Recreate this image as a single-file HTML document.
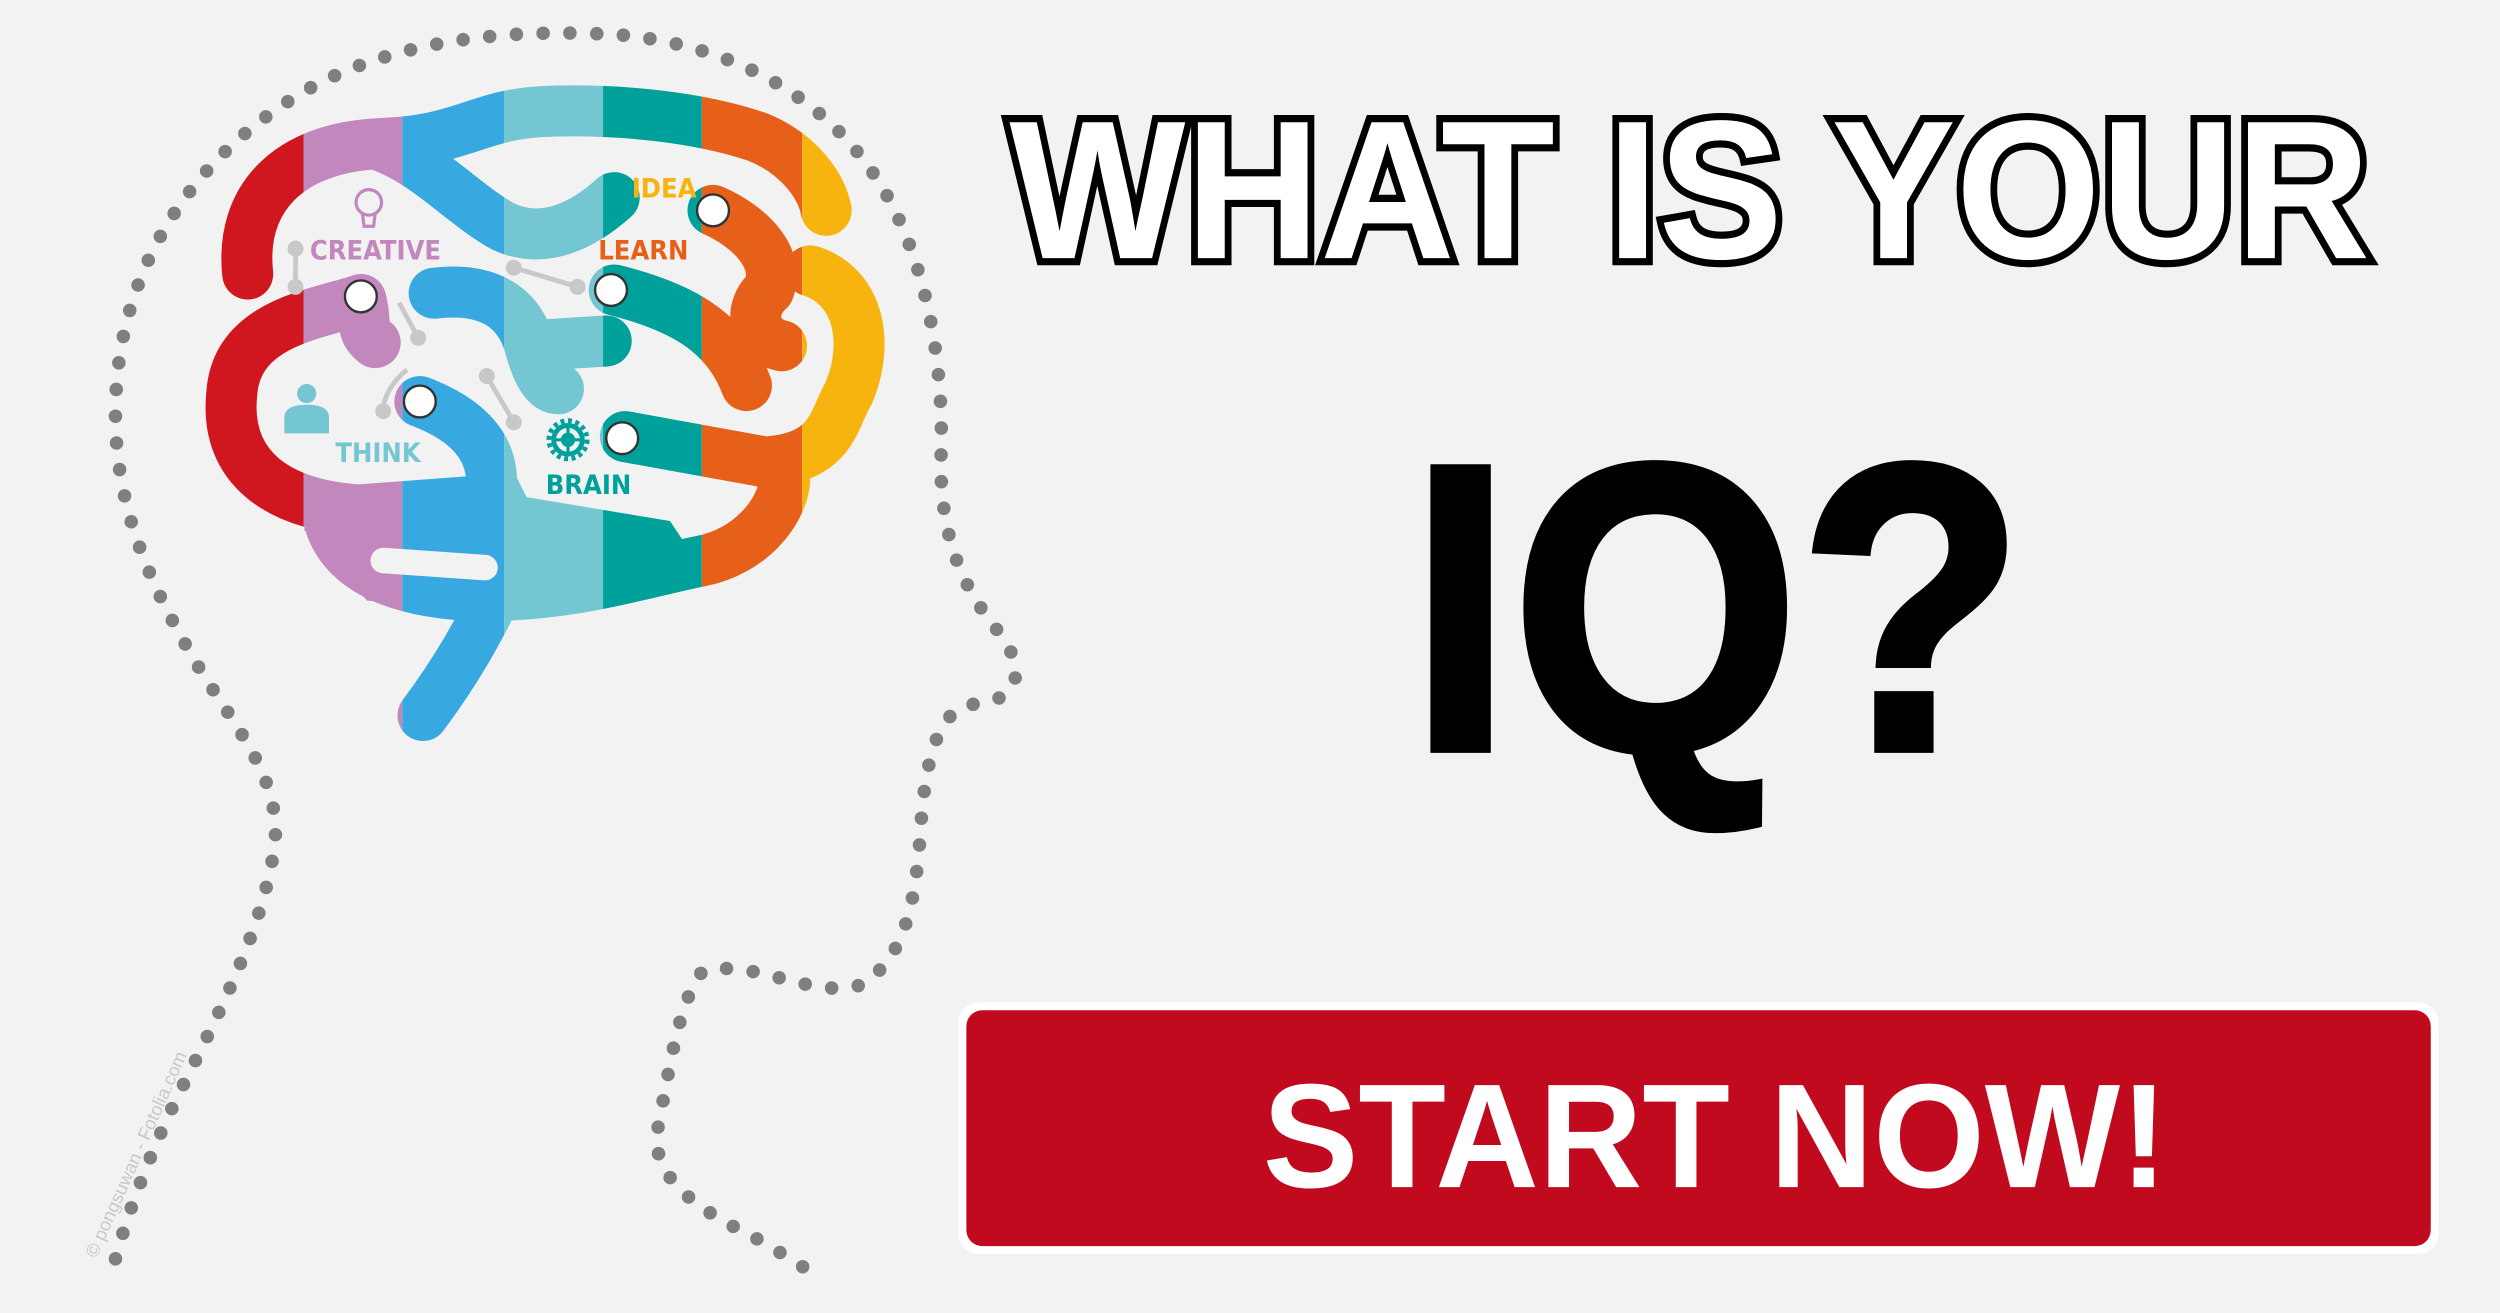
<!DOCTYPE html>
<html><head><meta charset="utf-8"><style>
html,body{margin:0;padding:0;background:#f2f2f2;overflow:hidden}
svg{display:block}
</style></head><body>
<svg width="2500" height="1313" viewBox="0 0 1568 824" xmlns="http://www.w3.org/2000/svg">
<rect width="1568" height="824" fill="#f2f2f2"/>
<path d="M72,790 C80,760 95,720 115,680 C140,630 165,580 172,530 C176,490 150,460 125,420 C95,370 72,320 72,260 C72,170 120,95 200,52 C260,22 330,18 390,22 C470,30 530,70 560,130 C585,180 592,240 590,290 C590,340 605,370 625,395 C645,420 640,440 610,442 C590,445 582,470 578,510 C575,560 570,600 540,618 C510,628 470,600 440,610 C425,630 420,670 412,710 C408,740 440,760 470,775 C485,783 495,790 505,796" fill="none" stroke="#7f7f7f" stroke-width="8.5" stroke-linecap="round" stroke-dasharray="0 16.8"/>
<defs>
<mask id="bm">
<g fill="none" stroke="#fff" stroke-width="32" stroke-linecap="round" stroke-linejoin="round">
<path d="M155,172 C150,125 180,92 240,90 C290,88 300,72 340,70 C390,68 440,74 475,86 C500,96 515,116 518,132"/>
<path d="M240,92 C270,104 290,128 315,142 C340,154 365,142 385,124"/>
<path d="M226,188 C200,197 148,202 145,247 C140,294 175,317 225,320 L292,315"/>
<path d="M226,188 C230,202 225,207 235,215"/>
<path d="M263,252 C295,264 308,282 308,302 L308,332"/>
<path d="M205,322 C210,352 240,372 300,374 C360,374 400,360 440,352 C470,346 490,322 492,302"/>
<path d="M316,362 C300,397 285,422 265,449"/>
<path d="M272,184 C305,180 325,192 332,217 C338,240 345,244 350,244"/>
<path d="M332,217 L380,214"/>
<path d="M385,182 C425,192 455,207 468,242"/>
<path d="M447,132 C470,142 490,162 482,182 C470,192 470,212 490,217"/>
<path d="M508,170 C540,180 545,217 532,247 C522,264 522,287 480,290 L392,274"/>
</g>
<path d="M190,332 L300,322 L320,292 L330,312 L420,327 L440,357 L320,382 L230,377 Z" fill="#fff"/>
<rect x="232" y="346" width="80" height="16" rx="8" fill="#000" transform="rotate(4 272 354)"/>
</mask>
</defs>
<g mask="url(#bm)">
<rect x="120" y="50" width="70" height="420" fill="#d0161f"/>
<rect x="190" y="50" width="62" height="420" fill="#c288bd"/>
<rect x="252" y="50" width="64" height="420" fill="#38a8e0"/>
<rect x="316" y="50" width="62" height="420" fill="#74c6d2"/>
<rect x="378" y="50" width="62" height="420" fill="#00a19a"/>
<rect x="440" y="50" width="63" height="420" fill="#e7601a"/>
<rect x="503" y="50" width="70" height="420" fill="#f7b40f"/>
</g>
<g fill="#fff" stroke="#333" stroke-width="1.5">
<circle cx="447" cy="132" r="10"/><circle cx="226" cy="186" r="10"/><circle cx="383" cy="182" r="10"/><circle cx="263" cy="252" r="10"/><circle cx="390" cy="275" r="10"/>
</g>
<g stroke="#c8c8c8" stroke-width="3" fill="#c8c8c8">
<line x1="185" y1="156" x2="185" y2="180"/><circle cx="185" cy="156" r="3.5"/><circle cx="185" cy="180" r="3.5"/>
<line x1="250" y1="190" x2="262" y2="212"/><circle cx="262" cy="212" r="3.5"/>
<line x1="322" y1="168" x2="362" y2="180"/><circle cx="322" cy="168" r="3.5"/><circle cx="362" cy="180" r="3.5"/>
<path d="M255,232 C245,240 240,250 240,258" fill="none"/><circle cx="240" cy="258" r="3.5"/>
<line x1="305" y1="236" x2="322" y2="265"/><circle cx="305" cy="236" r="3.5"/><circle cx="322" cy="265" r="3.5"/>
</g>
<g font-family="'DejaVu Sans Condensed','Liberation Sans Narrow','Liberation Sans',sans-serif" font-weight="bold" font-size="17">
<text x="194" y="163" fill="#c288bd">CREATIVE</text>
<text x="396" y="124" fill="#f7b40f">IDEA</text>
<text x="375" y="163" fill="#e7601a">LEARN</text>
<text x="210" y="290" fill="#74c6d2">THINK</text>
<text x="342" y="310" fill="#00a19a">BRAIN</text>
</g>
<g fill="none" stroke="#c288bd" stroke-width="2"><circle cx="231" cy="127" r="8"/><path d="M227,134 L228,142 L234,142 L235,134"/></g>
<circle cx="192" cy="247" r="6" fill="#74c6d2"/><path d="M178,272 L178,262 C178,256 184,254 192,254 C200,254 206,256 206,262 L206,272 Z" fill="#74c6d2"/>
<g fill="none" stroke="#00a19a" stroke-width="3"><circle cx="356" cy="276" r="9"/><circle cx="356" cy="276" r="3"/><path d="M356,267 V285 M347,276 H365" stroke-width="2"/><circle cx="356" cy="276" r="12" stroke-dasharray="2.5 2.2" stroke-width="3"/></g>
<text transform="translate(60,790) rotate(-66)" font-family="'Liberation Sans',sans-serif" font-size="11.5" fill="#c8c8c8">© pongsuwan - Fotolia.com</text>
<text x="633" y="162" font-family="'Liberation Sans',sans-serif" font-weight="bold" font-size="124" fill="#fff" stroke="#000" stroke-width="9" paint-order="stroke" stroke-linejoin="miter" textLength="854" lengthAdjust="spacingAndGlyphs">WHAT IS YOUR</text>
<text x="884" y="470" font-family="'Liberation Sans',sans-serif" font-weight="bold" font-size="256" fill="#000" stroke="#000" stroke-width="5" textLength="386" lengthAdjust="spacingAndGlyphs">IQ?</text>
<rect x="601" y="629" width="929" height="158" rx="13" fill="#fff"/>
<rect x="606" y="634" width="919" height="148" rx="10" fill="#c20a1e"/>
<text x="792" y="745" font-family="'Liberation Sans',sans-serif" font-weight="bold" font-size="93" fill="#fff" textLength="568" lengthAdjust="spacingAndGlyphs">START NOW!</text>
</svg>
</body></html>
